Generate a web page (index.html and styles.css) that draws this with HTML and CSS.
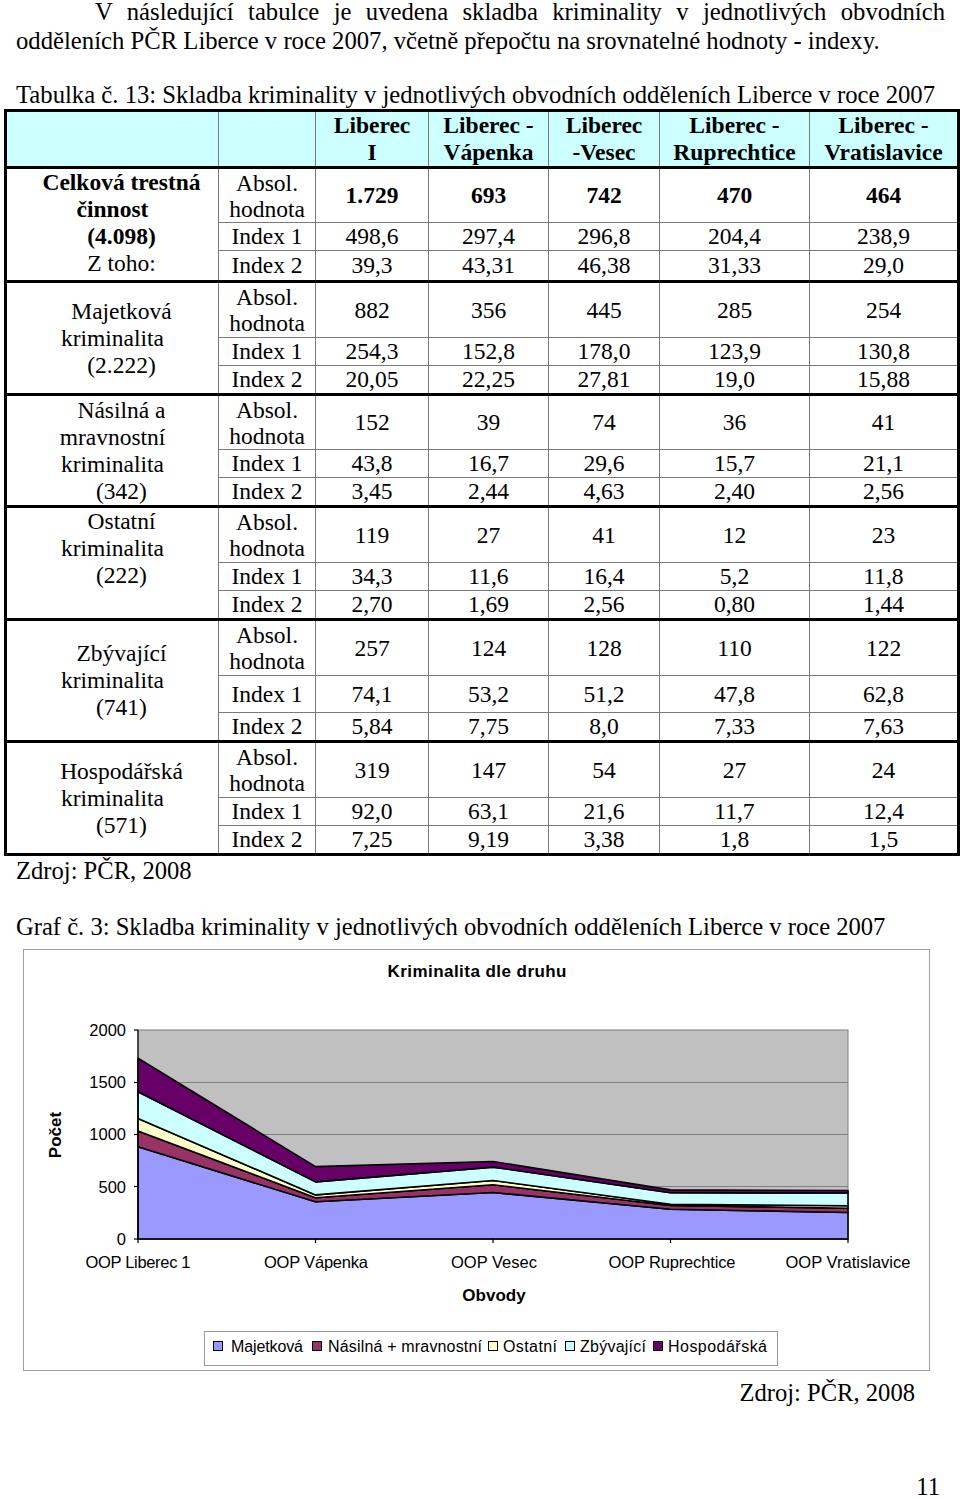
FILE: index.html
```html
<!DOCTYPE html>
<html lang="cs">
<head>
<meta charset="utf-8">
<title>Skladba kriminality</title>
<link rel="stylesheet" href="styles.css">
</head>
<body>
<div class="page">
  <p class="intro">V následující tabulce je uvedena skladba kriminality v jednotlivých obvodních odděleních PČR Liberce v roce 2007, včetně přepočtu na srovnatelné hodnoty - indexy.</p>
  <p class="caption">Tabulka č. 13: Skladba kriminality v jednotlivých obvodních odděleních Liberce v roce 2007</p>

  <table class="crime">
    <colgroup>
      <col class="c-lbl"><col class="c-type"><col class="c-1"><col class="c-2"><col class="c-3"><col class="c-4"><col class="c-5">
    </colgroup>
    <thead>
      <tr class="hd">
        <th></th><th></th>
        <th>Liberec<br>I</th>
        <th>Liberec -<br>Vápenka</th>
        <th>Liberec<br>-Vesec</th>
        <th>Liberec -<br>Ruprechtice</th>
        <th>Liberec -<br>Vratislavice</th>
      </tr>
    </thead>
    <tbody class="grp g1">
      <tr class="a">
        <td rowspan="3" class="lbl top"><b><span class="o">Celková trestná</span><br>činnost<br><span class="o">(4.098)</span></b><br><span class="o">Z toho:</span></td>
        <td class="ah">Absol.<br>hodnota</td><td><b>1.729</b></td><td><b>693</b></td><td><b>742</b></td><td><b>470</b></td><td><b>464</b></td>
      </tr>
      <tr class="i1"><td>Index 1</td><td>498,6</td><td>297,4</td><td>296,8</td><td>204,4</td><td>238,9</td></tr>
      <tr class="i2"><td>Index 2</td><td>39,3</td><td>43,31</td><td>46,38</td><td>31,33</td><td>29,0</td></tr>
    </tbody>
    <tbody class="grp g2">
      <tr class="a">
        <td rowspan="3" class="lbl"><span class="o">Majetková</span><br>kriminalita<br><span class="o">(2.222)</span></td>
        <td class="ah">Absol.<br>hodnota</td><td>882</td><td>356</td><td>445</td><td>285</td><td>254</td>
      </tr>
      <tr class="i1"><td>Index 1</td><td>254,3</td><td>152,8</td><td>178,0</td><td>123,9</td><td>130,8</td></tr>
      <tr class="i2"><td>Index 2</td><td>20,05</td><td>22,25</td><td>27,81</td><td>19,0</td><td>15,88</td></tr>
    </tbody>
    <tbody class="grp g3">
      <tr class="a">
        <td rowspan="3" class="lbl"><span class="o">Násilná a</span><br>mravnostní<br>kriminalita<br><span class="o">(342)</span></td>
        <td class="ah">Absol.<br>hodnota</td><td>152</td><td>39</td><td>74</td><td>36</td><td>41</td>
      </tr>
      <tr class="i1"><td>Index 1</td><td>43,8</td><td>16,7</td><td>29,6</td><td>15,7</td><td>21,1</td></tr>
      <tr class="i2"><td>Index 2</td><td>3,45</td><td>2,44</td><td>4,63</td><td>2,40</td><td>2,56</td></tr>
    </tbody>
    <tbody class="grp g4">
      <tr class="a">
        <td rowspan="3" class="lbl top"><span class="o">Ostatní</span><br>kriminalita<br><span class="o">(222)</span></td>
        <td class="ah">Absol.<br>hodnota</td><td>119</td><td>27</td><td>41</td><td>12</td><td>23</td>
      </tr>
      <tr class="i1"><td>Index 1</td><td>34,3</td><td>11,6</td><td>16,4</td><td>5,2</td><td>11,8</td></tr>
      <tr class="i2"><td>Index 2</td><td>2,70</td><td>1,69</td><td>2,56</td><td>0,80</td><td>1,44</td></tr>
    </tbody>
    <tbody class="grp g5">
      <tr class="a">
        <td rowspan="3" class="lbl"><span class="o">Zbývající</span><br>kriminalita<br><span class="o">(741)</span></td>
        <td class="ah">Absol.<br>hodnota</td><td>257</td><td>124</td><td>128</td><td>110</td><td>122</td>
      </tr>
      <tr class="i1"><td>Index 1</td><td>74,1</td><td>53,2</td><td>51,2</td><td>47,8</td><td>62,8</td></tr>
      <tr class="i2"><td>Index 2</td><td>5,84</td><td>7,75</td><td>8,0</td><td>7,33</td><td>7,63</td></tr>
    </tbody>
    <tbody class="grp g6">
      <tr class="a">
        <td rowspan="3" class="lbl"><span class="o">Hospodářská</span><br>kriminalita<br><span class="o">(571)</span></td>
        <td class="ah">Absol.<br>hodnota</td><td>319</td><td>147</td><td>54</td><td>27</td><td>24</td>
      </tr>
      <tr class="i1"><td>Index 1</td><td>92,0</td><td>63,1</td><td>21,6</td><td>11,7</td><td>12,4</td></tr>
      <tr class="i2"><td>Index 2</td><td>7,25</td><td>9,19</td><td>3,38</td><td>1,8</td><td>1,5</td></tr>
    </tbody>
  </table>

  <p class="source">Zdroj: PČR, 2008</p>
  <p class="caption graf">Graf č. 3: Skladba kriminality v jednotlivých obvodních odděleních Liberce v roce 2007</p>

  <div class="chart">
    <svg class="chart-svg" width="905" height="420" viewBox="24 950 905 420" xmlns="http://www.w3.org/2000/svg">
      <text class="t-title" x="477" y="977" text-anchor="middle" textLength="179">Kriminalita dle druhu</text>

      <rect x="138" y="1030" width="710" height="209" fill="#c0c0c0" stroke="#808080" stroke-width="1"/>
      <g stroke="#808080" stroke-width="1">
        <line x1="138" y1="1082.5" x2="848" y2="1082.5"/>
        <line x1="138" y1="1134.5" x2="848" y2="1134.5"/>
        <line x1="138" y1="1186.5" x2="848" y2="1186.5"/>
      </g>

      <g stroke="#000" stroke-width="1.6" stroke-linejoin="round">
        <polygon fill="#9999ff" points="138,1146.8 315.5,1201.8 493,1192.5 670.5,1209.2 848,1212.5 848,1239 138,1239"/>
        <polygon fill="#993366" points="138,1130.9 315.5,1197.7 493,1184.8 670.5,1205.5 848,1208.2 848,1212.5 670.5,1209.2 493,1192.5 315.5,1201.8 138,1146.8"/>
        <polygon fill="#ffffcc" points="138,1118.5 315.5,1194.9 493,1180.5 670.5,1204.2 848,1205.8 848,1208.2 670.5,1205.5 493,1184.8 315.5,1197.7 138,1130.9"/>
        <polygon fill="#ccffff" points="138,1091.7 315.5,1181.9 493,1167.1 670.5,1192.7 848,1193 848,1205.8 670.5,1204.2 493,1180.5 315.5,1194.9 138,1118.5"/>
        <polygon fill="#660066" points="138,1058.3 315.5,1166.6 493,1161.5 670.5,1189.9 848,1190.5 848,1193 670.5,1192.7 493,1167.1 315.5,1181.9 138,1091.7"/>
      </g>

      <g stroke="#000" stroke-width="1.2">
        <line x1="138" y1="1030" x2="138" y2="1239"/>
        <line x1="138" y1="1239" x2="848" y2="1239"/>
        <line x1="134" y1="1030" x2="138" y2="1030"/>
        <line x1="134" y1="1082.5" x2="138" y2="1082.5"/>
        <line x1="134" y1="1134.5" x2="138" y2="1134.5"/>
        <line x1="134" y1="1186.5" x2="138" y2="1186.5"/>
        <line x1="134" y1="1239" x2="138" y2="1239"/>
        <line x1="138" y1="1239" x2="138" y2="1243"/>
        <line x1="315.5" y1="1239" x2="315.5" y2="1243"/>
        <line x1="493" y1="1239" x2="493" y2="1243"/>
        <line x1="670.5" y1="1239" x2="670.5" y2="1243"/>
        <line x1="848" y1="1239" x2="848" y2="1243"/>
      </g>

      <g class="t-axis" text-anchor="end">
        <text x="126" y="1036">2000</text>
        <text x="126" y="1088">1500</text>
        <text x="126" y="1140">1000</text>
        <text x="126" y="1193">500</text>
        <text x="126" y="1245">0</text>
      </g>
      <text class="t-bold" transform="translate(61 1135) rotate(-90)" text-anchor="middle">Počet</text>

      <g class="t-axis" text-anchor="middle">
        <text x="138" y="1268" textLength="105">OOP Liberec 1</text>
        <text x="316" y="1268" textLength="104">OOP Vápenka</text>
        <text x="494" y="1268" textLength="86">OOP Vesec</text>
        <text x="672" y="1268" textLength="127">OOP Ruprechtice</text>
        <text x="848" y="1268" textLength="125">OOP Vratislavice</text>
      </g>
      <text class="t-bold" x="494" y="1301" text-anchor="middle">Obvody</text>

      <rect x="204.5" y="1331.5" width="573" height="34" fill="#fff" stroke="#999" stroke-width="1"/>
      <g stroke="#000" stroke-width="1">
        <rect x="213.5" y="1341.5" width="9" height="9" fill="#9999ff"/>
        <rect x="312.5" y="1341.5" width="9" height="9" fill="#993366"/>
        <rect x="488.5" y="1341.5" width="9" height="9" fill="#ffffcc"/>
        <rect x="565.5" y="1341.5" width="9" height="9" fill="#ccffff"/>
        <rect x="653.5" y="1341.5" width="9" height="9" fill="#660066"/>
      </g>
      <g class="t-legend">
        <text x="231" y="1352" textLength="72">Majetková</text>
        <text x="328" y="1352" textLength="154">Násilná + mravnostní</text>
        <text x="503" y="1352" textLength="54">Ostatní</text>
        <text x="580" y="1352" textLength="66">Zbývající</text>
        <text x="668" y="1352" textLength="99">Hospodářská</text>
      </g>
    </svg>
  </div>

  <p class="source right">Zdroj: PČR, 2008</p>
  <p class="pagenum">11</p>
</div>
</body>
</html>
```

FILE: styles.css
```css
html, body {
  margin: 0;
  padding: 0;
  background: #fff;
}

body {
  font-family: "Liberation Serif", "Times New Roman", serif;
  color: #000;
}

.page {
  width: 929px;
  padding: 0 15px 0 16px;
}

.intro {
  margin: -3px 0 0;
  font-size: 24.7px;
  line-height: 29px;
  text-align: justify;
  text-indent: 79px;
}

.caption {
  margin: 25px 0 0;
  font-size: 24.7px;
  line-height: 29px;
  white-space: nowrap;
}

/* ---------- table ---------- */
.crime {
  border-collapse: collapse;
  table-layout: fixed;
  width: 953px;
  margin: 0 0 0 -12px;
  border: 3px solid #000;
  font-size: 23.5px;
  line-height: 27px;
}

.c-lbl { width: 213px; }
.c-type { width: 97px; }
.c-1 { width: 113px; }
.c-2 { width: 120px; }
.c-3 { width: 111px; }
.c-4 { width: 150px; }
.c-5 { width: 149px; }

.crime th,
.crime td {
  border: 1px solid #7a7a7a;
  padding: 0;
  text-align: center;
  vertical-align: middle;
  white-space: nowrap;
}

.crime td.ah {
  line-height: 26px;
}

.crime thead th {
  background: #ccffff;
  font-weight: bold;
}

.crime .hd { height: 56px; }

.crime tbody.grp {
  border-top: 3px solid #000;
}

.crime .lbl {
  vertical-align: middle;
}

.crime .lbl.top {
  vertical-align: top;
}

.crime .lbl .o {
  display: inline-block;
  padding-left: 18px;
}

.g1 .a { height: 55px; }
.g1 .i1 { height: 28px; }
.g1 .i2 { height: 31px; }

.g2 .a { height: 56px; }
.g2 .i1 { height: 27px; }
.g2 .i2 { height: 28px; }

.g3 .a { height: 55px; }
.g3 .i1 { height: 27px; }
.g3 .i2 { height: 28px; }

.g4 .a { height: 56px; }
.g4 .i1 { height: 28px; }
.g4 .i2 { height: 28px; }

.g5 .a { height: 56px; }
.g5 .i1 { height: 37px; }
.g5 .i2 { height: 29px; }

.g6 .a { height: 56px; }
.g6 .i1 { height: 28px; }
.g6 .i2 { height: 28px; }

/* ---------- sources ---------- */
.source {
  margin: 0;
  font-size: 24.6px;
  line-height: 29px;
}

.caption.graf {
  margin-top: 27px;
  font-size: 24.6px;
}

.source.right {
  margin-top: 7px;
  text-align: right;
  padding-right: 30px;
}

.pagenum {
  margin: 72px 0 0;
  text-align: right;
  padding-right: 5px;
  font-size: 24.6px;
  line-height: 16px;
}

/* ---------- chart ---------- */
.chart {
  width: 905px;
  height: 420px;
  margin: 8px 0 0 7px;
  border: 1px solid #a0a0a0;
}

.chart-svg {
  display: block;
}

.t-title {
  font-family: "Liberation Sans", Arial, sans-serif;
  font-weight: bold;
  font-size: 17px;
}

.t-axis {
  font-family: "Liberation Sans", Arial, sans-serif;
  font-size: 16.5px;
}

.t-bold {
  font-family: "Liberation Sans", Arial, sans-serif;
  font-weight: bold;
  font-size: 17px;
}

.t-legend {
  font-family: "Liberation Sans", Arial, sans-serif;
  font-size: 16px;
}
```
